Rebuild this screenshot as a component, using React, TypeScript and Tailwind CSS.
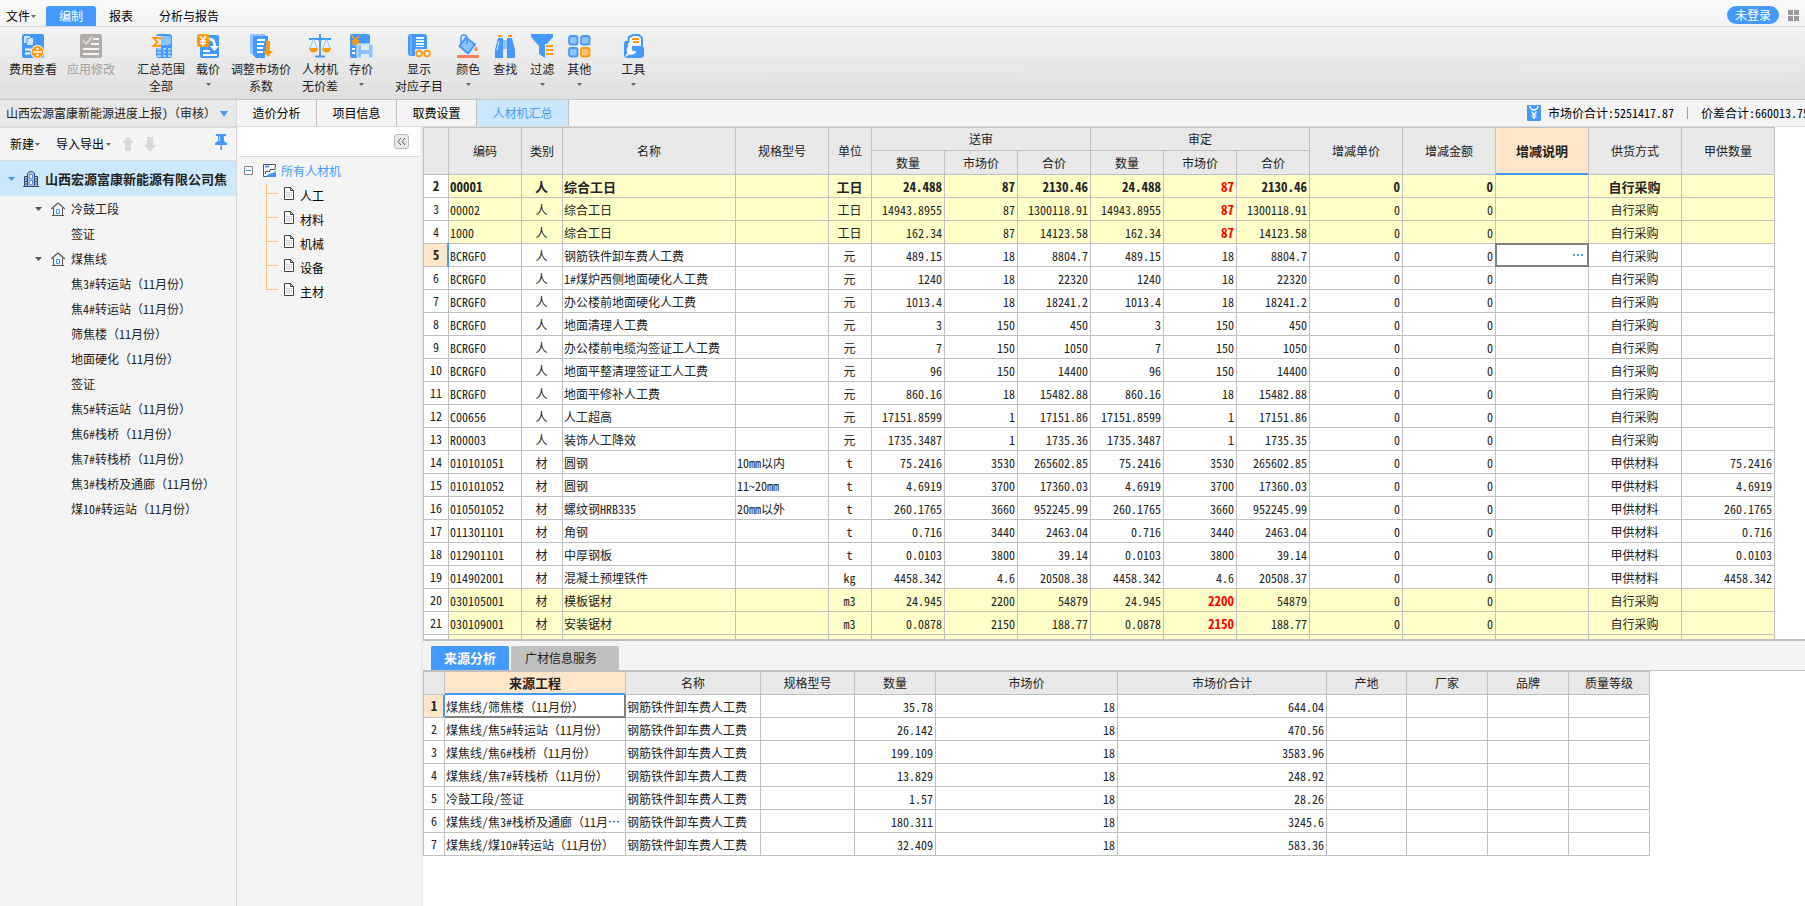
import type { ReactNode } from 'react'
import clsx from 'clsx'

type Item = {
  no: number
  code: string
  kind: string
  name: string
  spec?: string
  unit: string
  qty: string
  price: string
  total: string
  checkedTotal?: string
  owner?: string
  tone?: 'bold' | 'changed'
}

const items: Item[] = [
  { no: 2, code: '00001', kind: '人', name: '综合工日', unit: '工日', qty: '24.488', price: '87', total: '2130.46', tone: 'bold' },
  { no: 3, code: '00002', kind: '人', name: '综合工日', unit: '工日', qty: '14943.8955', price: '87', total: '1300118.91', tone: 'changed' },
  { no: 4, code: '1000', kind: '人', name: '综合工日', unit: '工日', qty: '162.34', price: '87', total: '14123.58', tone: 'changed' },
  { no: 5, code: 'BCRGF0', kind: '人', name: '钢筋铁件卸车费人工费', unit: '元', qty: '489.15', price: '18', total: '8804.7' },
  { no: 6, code: 'BCRGF0', kind: '人', name: '1#煤炉西侧地面硬化人工费', unit: '元', qty: '1240', price: '18', total: '22320' },
  { no: 7, code: 'BCRGF0', kind: '人', name: '办公楼前地面硬化人工费', unit: '元', qty: '1013.4', price: '18', total: '18241.2' },
  { no: 8, code: 'BCRGF0', kind: '人', name: '地面清理人工费', unit: '元', qty: '3', price: '150', total: '450' },
  { no: 9, code: 'BCRGF0', kind: '人', name: '办公楼前电缆沟签证工人工费', unit: '元', qty: '7', price: '150', total: '1050' },
  { no: 10, code: 'BCRGF0', kind: '人', name: '地面平整清理签证工人工费', unit: '元', qty: '96', price: '150', total: '14400' },
  { no: 11, code: 'BCRGF0', kind: '人', name: '地面平修补人工费', unit: '元', qty: '860.16', price: '18', total: '15482.88' },
  { no: 12, code: 'C00656', kind: '人', name: '人工超高', unit: '元', qty: '17151.8599', price: '1', total: '17151.86' },
  { no: 13, code: 'R00003', kind: '人', name: '装饰人工降效', unit: '元', qty: '1735.3487', price: '1', total: '1735.36', checkedTotal: '1735.35' },
  { no: 14, code: '010101051', kind: '材', name: '圆钢', spec: '10mm以内', unit: 't', qty: '75.2416', price: '3530', total: '265602.85', owner: '75.2416' },
  { no: 15, code: '010101052', kind: '材', name: '圆钢', spec: '11~20mm', unit: 't', qty: '4.6919', price: '3700', total: '17360.03', owner: '4.6919' },
  { no: 16, code: '010501052', kind: '材', name: '螺纹钢HRB335', spec: '20mm以外', unit: 't', qty: '260.1765', price: '3660', total: '952245.99', owner: '260.1765' },
  { no: 17, code: '011301101', kind: '材', name: '角钢', unit: 't', qty: '0.716', price: '3440', total: '2463.04', owner: '0.716' },
  { no: 18, code: '012901101', kind: '材', name: '中厚钢板', unit: 't', qty: '0.0103', price: '3800', total: '39.14', owner: '0.0103' },
  { no: 19, code: '014902001', kind: '材', name: '混凝土预埋铁件', unit: 'kg', qty: '4458.342', price: '4.6', total: '20508.38', checkedTotal: '20508.37', owner: '4458.342' },
  { no: 20, code: '030105001', kind: '材', name: '模板锯材', unit: 'm3', qty: '24.945', price: '2200', total: '54879', tone: 'changed' },
  { no: 21, code: '030109001', kind: '材', name: '安装锯材', unit: 'm3', qty: '0.0878', price: '2150', total: '188.77', tone: 'changed' },
]

const sources = [
  ['煤焦线/筛焦楼（11月份）', '35.78', '644.04'],
  ['煤焦线/焦5#转运站（11月份）', '26.142', '470.56'],
  ['煤焦线/焦6#栈桥（11月份）', '199.109', '3583.96'],
  ['煤焦线/焦7#转栈桥（11月份）', '13.829', '248.92'],
  ['冷鼓工段/签证', '1.57', '28.26'],
  ['煤焦线/焦3#栈桥及通廊（11月⋯', '180.311', '3245.6'],
  ['煤焦线/煤10#转运站（11月份）', '32.409', '583.36'],
]

const project = [
  { label: '冷鼓工段', group: true },
  { label: '签证' },
  { label: '煤焦线', group: true },
  { label: '焦3#转运站（11月份）' },
  { label: '焦4#转运站（11月份）' },
  { label: '筛焦楼（11月份）' },
  { label: '地面硬化（11月份）' },
  { label: '签证' },
  { label: '焦5#转运站（11月份）' },
  { label: '焦6#栈桥（11月份）' },
  { label: '焦7#转栈桥（11月份）' },
  { label: '焦3#栈桥及通廊（11月份）' },
  { label: '煤10#转运站（11月份）' },
]

const uiFont = "font-['Noto_Sans_CJK_SC',sans-serif]"
const gridFont = "font-['Noto_Sans_Mono_CJK_SC','Liberation_Mono','Noto_Sans_CJK_SC',monospace]"

const box = 'h-[23px] overflow-hidden whitespace-nowrap border-b border-r border-[#c0c0c0]'
const cell = `${box} pt-[2px] pr-[2px] pb-0 pl-px`
const num = `${box} p-0 text-center`
const head = 'border-b border-r border-[#c0c0c0] bg-[#e8e8e8] p-0 text-center font-normal whitespace-nowrap'

function Caret({ className = 'text-[#666]' }: { className?: string }) {
  return (
    <svg width="5" height="3" viewBox="0 0 5 3" className={className}>
      <path d="M0 0h5L2.5 3z" fill="currentColor" />
    </svg>
  )
}

function Icon({ children }: { children: ReactNode }) {
  return (
    <svg width="24" height="24" viewBox="0 0 24 24" fill="none" className="shrink-0">
      {children}
    </svg>
  )
}

const B = '#4499ff'
const L = '#8cc4ff'
const O = '#ff9a0e'

const icons = {
  fee: (
    <Icon>
      <rect x="1" y="0" width="22" height="24" rx="2" fill={B} />
      <path d="M3 2h6v2h3v7H6V9H3z" fill="#cfe5ff" />
      <path d="M6 4.500h3M6 4.500V9" stroke={B} />
      <path d="M4 15.500h6M4 19.500h5" stroke="#fff" strokeWidth="2" />
      <circle cx="16.500" cy="18" r="6.500" fill={O} stroke="#fff" strokeWidth="1" />
      <path d="M12 18h9" stroke="#fff" strokeWidth="1.500" />
      <circle cx="16.500" cy="15" r="1.200" fill="#fff" />
      <circle cx="16.500" cy="21" r="1.200" fill="#fff" />
    </Icon>
  ),
  apply: (
    <Icon>
      <rect x="1" y="0" width="22" height="24" rx="2" fill="#b0aca8" />
      <path d="M4 6l3 4 6-7" stroke="#d9d6d3" strokeWidth="2" />
      <path d="M14 5h6M12 10h8M4 15h16M4 20h16" stroke="#f4f4f4" strokeWidth="2" />
    </Icon>
  ),
  scope: (
    <Icon>
      <rect x="7" y="0" width="16" height="24" rx="3" fill={B} />
      <rect x="10" y="2" width="12" height="9" rx="3" fill={L} />
      <path d="M8 15h4M14 15h3M19 15h3M8 18.500h4M14 18.500h3M19 18.500h3M8 22h4M14 22h3M19 22h3" stroke="#a9d3ff" strokeWidth="2" />
      <path d="M2 2h10v12H2z" fill="#eef0f2" />
      <path d="M11 5.500V4H4.500l4 4-4 4H11v-1.500" stroke={O} strokeWidth="2" />
    </Icon>
  ),
  load: (
    <Icon>
      <rect x="4" y="1" width="19" height="23" rx="2" fill={B} />
      <path d="M7 17h7M7 21h14" stroke="#fff" strokeWidth="2" />
      <path d="M13 5c5 0 6 4 5.500 8" stroke="#fff" strokeWidth="2.500" />
      <path d="M14 12h9l-4.500 5z" fill="#fff" />
      <rect x="1" y="0" width="12" height="13" rx="2" fill={O} />
      <path d="M4 2l3 4 3-4M7 6v6M4 7h6M4 9.500h6" stroke="#fff" strokeWidth="1.600" />
    </Icon>
  ),
  adjust: (
    <Icon>
      <rect x="1" y="0" width="16" height="20" rx="2" fill={L} />
      <path d="M5 2h14v15h-3v7H7l-3-3V3z" fill={B} />
      <path d="M8 6h8M8 10h7M8 14h6M8 18h6" stroke="#fff" strokeWidth="1.800" />
      <path d="M17 7h4v10h3l-5 6-5-6h3z" fill={O} />
    </Icon>
  ),
  scales: (
    <Icon>
      <path d="M12 0v22M1 5h22M7 22.500h10" stroke={B} strokeWidth="1.800" />
      <path d="M5.500 5L2 14M5.500 5L9 14M18.500 5L15 14M18.500 5L22 14" stroke={L} />
      <path d="M1 14h9a4.500 4.500 0 0 1-9 0zM14 14h9a4.500 4.500 0 0 1-9 0z" fill={O} />
      <circle cx="12" cy="5" r="2" fill={B} />
    </Icon>
  ),
  save: (
    <Icon>
      <rect x="1" y="0" width="20" height="24" rx="2" fill={B} />
      <path d="M3 2l3.500 4L10 2M6.500 6v6M3 7h7M3 9.500h7" stroke={O} strokeWidth="1.800" />
      <path d="M3 15h3M3 19h3" stroke="#fff" strokeWidth="2" />
      <rect x="8" y="10" width="16" height="14" rx="2" fill={L} stroke="#eaf4ff" />
      <path d="M12 11h8v5h-8zM12 20h8v4h-8z" fill="#dceeff" />
    </Icon>
  ),
  show: (
    <Icon>
      <rect x="1" y="0" width="19" height="22" rx="3" fill={B} />
      <path d="M4 1v20" stroke={L} />
      <path d="M9 3h8v10H9z" fill="#eaf4ff" />
      <path d="M9 5.500h8M9 8.500h8M9 11.500h8" stroke={B} strokeWidth="1.200" />
      <path d="M8 15h16v9H8z" fill="#ebebeb" />
      <circle cx="12" cy="19.500" r="2.800" stroke={O} strokeWidth="1.800" />
      <circle cx="20" cy="19.500" r="2.800" stroke={O} strokeWidth="1.800" />
      <path d="M14 18.500h4" stroke={O} strokeWidth="1.500" />
    </Icon>
  ),
  color: (
    <Icon>
      <path d="M10 3.500l9 7-7 9-8.500-7.500z" fill={L} stroke={B} strokeWidth="2" strokeLinejoin="round" />
      <path d="M5 11V4c0-4 6-4 6 0v6" stroke={B} strokeWidth="1.600" />
      <path d="M20 12c2 3 2 5 0 5s-2-2 0-5z" fill="#ff7f5c" />
      <path d="M1 22.500h22" stroke="#ff7f5c" strokeWidth="3" />
    </Icon>
  ),
  find: (
    <Icon>
      <path d="M5 2h4M15 2h4" stroke={O} strokeWidth="2" />
      <path d="M5 4h5v20H2v-8zM14 4h5l3 12v8h-8z" fill={B} />
      <path d="M10 6h4v9h-4z" fill={L} />
      <path d="M4 16L6 7" stroke="#dceeff" />
    </Icon>
  ),
  filter: (
    <Icon>
      <path d="M1 0h22v3l-8 9v12l-6-4v-8L1 3z" fill={B} />
      <path d="M15 10h9v12h-9z" fill="#ebebeb" />
      <path d="M16 12h7M16 16h7M16 20h7" stroke={O} strokeWidth="2" />
    </Icon>
  ),
  others: (
    <Icon>
      <g fill={L} stroke={B} strokeWidth="1.800">
        <rect x="2" y="2" width="8.500" height="8.500" rx="2" />
        <rect x="14" y="2" width="8.500" height="8.500" rx="2" />
        <rect x="2" y="14" width="8.500" height="8.500" rx="2" />
        <rect x="14" y="14" width="8.500" height="8.500" rx="2" fill="#ffc46b" stroke={O} />
      </g>
    </Icon>
  ),
  tools: (
    <Icon>
      <path d="M7 9l1-6 4-2h6l3 3v8" stroke={B} strokeWidth="2" fill="#f4f9ff" />
      <path d="M11 5h7M12 8h6" stroke={O} strokeWidth="2" />
      <path d="M4 7h3v5h14l2 2v8l-2 2H5l-2-2V9z" fill={B} />
      <path d="M5 22l5-5M10 12a4 4 0 1 0 4 6l-4-1z" stroke="#fff" strokeWidth="1.800" fill="#fff" />
    </Icon>
  ),
}

function Tool({ icon, label, sub, menu, disabled }: { icon: ReactNode; label: string; sub?: string; menu?: boolean; disabled?: boolean }) {
  return (
    <button disabled={disabled} className="flex flex-col items-center text-xs leading-[17px] text-[#222] disabled:text-[#a0a0a0]">
      {icon}
      <span className="mt-[2px] whitespace-nowrap">{label}</span>
      {sub && <span className="whitespace-nowrap">{sub}</span>}
      {menu && <Caret className="mt-[6px] text-[#666]" />}
    </button>
  )
}

function TopBar() {
  return (
    <header className="flex h-[27px] shrink-0 items-end border-b border-[#d6d6d6] bg-linear-to-b from-[#fafafa] to-[#f3f3f3] text-xs">
      <button className="flex h-5 items-center gap-px pr-[10px] pl-[6px]">
        文件
        <Caret />
      </button>
      <button className="h-5 rounded-t-[3px] bg-[#4499ff] px-[13px] text-white">编制</button>
      <button className="h-5 px-[13px]">报表</button>
      <button className="h-5 px-[13px]">分析与报告</button>
      <div className="mb-[2px] ml-auto flex items-center gap-[9px] pr-[6px]">
        <button className="h-[18px] rounded-full bg-[#4499ff] px-2 leading-[18px] text-white">未登录</button>
        <button aria-label="布局">
          <svg width="11" height="11" viewBox="0 0 11 11" fill="#999">
            <path d="M0 0h5v5H0zM6 0h5v5H6zM0 6h5v5H0zM6 6h5v5H6z" />
          </svg>
        </button>
      </div>
    </header>
  )
}

function Ribbon() {
  return (
    <div className="flex h-[73px] shrink-0 items-start gap-[22px] border-b border-[#c8c8c8] bg-linear-to-b from-[#f3f3f3] to-[#dedede] px-[9px] pt-[7px]">
      <div className="flex gap-[10px]">
        <Tool icon={icons.fee} label="费用查看" />
        <Tool icon={icons.apply} label="应用修改" disabled />
      </div>
      <div className="flex gap-[11px]">
        <Tool icon={icons.scope} label="汇总范围" sub="全部" />
        <Tool icon={icons.load} label="载价" menu />
        <Tool icon={icons.adjust} label="调整市场价" sub="系数" />
        <Tool icon={icons.scales} label="人材机" sub="无价差" />
        <Tool icon={icons.save} label="存价" menu />
      </div>
      <div className="flex gap-[13px]">
        <Tool icon={icons.show} label="显示" sub="对应子目" />
        <Tool icon={icons.color} label="颜色" menu />
        <Tool icon={icons.find} label="查找" />
        <Tool icon={icons.filter} label="过滤" menu />
        <Tool icon={icons.others} label="其他" menu />
      </div>
      <div className="ml-2 flex">
        <Tool icon={icons.tools} label="工具" menu />
      </div>
    </div>
  )
}

function ProjectPanel() {
  return (
    <aside className={clsx('flex w-[237px] shrink-0 flex-col border-r border-[#d8d8d8] text-xs text-[#222]', gridFont)}>
      <div className="relative h-[28px] shrink-0 border-b-2 border-[#dcdcdc] bg-[#e8e8e8]">
        <select aria-label="当前工程" className="h-full w-full appearance-none bg-transparent pl-[6px] text-xs outline-none">
          <option>山西宏源富康新能源进度上报)（审核）</option>
        </select>
        <svg width="8" height="6" viewBox="0 0 8 6" className="pointer-events-none absolute top-[11px] right-2">
          <path d="M0 0h8L4 6z" fill={B} />
        </svg>
      </div>
      <div className={clsx('flex h-[33px] shrink-0 items-center border-b border-[#d8d8d8] pl-[10px] text-black', uiFont)}>
        <button className="flex items-center gap-px">
          新建
          <Caret />
        </button>
        <button className="ml-4 flex items-center gap-[2px]">
          导入导出
          <Caret />
        </button>
        <button aria-label="上移" className="ml-[11px]">
          <svg width="12" height="16" viewBox="0 0 12 16" fill="#d8d8d8">
            <path d="M6 0l6 7H9v8H3V7H0z" />
          </svg>
        </button>
        <button aria-label="下移" className="ml-[10px]">
          <svg width="12" height="16" viewBox="0 0 12 16" fill="#d8d8d8">
            <path d="M6 16l6-7H9V1H3v8H0z" />
          </svg>
        </button>
        <button aria-label="固定" className="mr-[9px] mb-1 ml-auto">
          <svg width="12" height="16" viewBox="0 0 12 16" fill={B}>
            <path d="M1 0h10v2H9v5l3 2v2H0V9l3-2V2H1z" />
            <path d="M5.500 11H7v5H5.500z" />
            <path d="M4.500 2v5" stroke="#b8dbff" />
          </svg>
        </button>
      </div>
      <div className="flex h-[35px] shrink-0 items-center overflow-hidden bg-[#cce8ff] pl-2">
        <svg width="7" height="4" viewBox="0 0 7 4" className="shrink-0">
          <path d="M0 0h7L3.500 4z" fill={B} />
        </svg>
        <svg width="16" height="16" viewBox="0 0 16 16" fill="none" className="mr-[6px] ml-2 shrink-0">
          <path d="M4.500 15V2.500l2-2h3l2 2V15" stroke="#404a66" fill="#a9bde0" />
          <path d="M1.500 15V5.500h3V15M11.500 5.500h3V15M0 15.500h16" stroke="#404a66" fill="#a9bde0" />
          <path d="M2 8h2M2 10.500h2M2 13h2M12 8h2M12 10.500h2M12 13h2" stroke="#404a66" />
          <path d="M6.500 3.500h3v4h-3zM6.500 9.500h3v4h-3z" stroke={B} fill="#fff" />
        </svg>
        <span className="text-[13px] font-bold whitespace-nowrap">山西宏源富康新能源有限公司焦</span>
      </div>
      <ul>
        {project.map((node, i) => (
          <li key={i} className="flex h-[25px] items-center pl-[35px] whitespace-nowrap">
            {node.group ? (
              <>
                <svg width="7" height="4" viewBox="0 0 7 4">
                  <path d="M0 0h7L3.500 4z" fill="#555" />
                </svg>
                <svg width="14" height="14" viewBox="0 0 14 14" fill="none" className="mr-[6px] ml-[9px]">
                  <path d="M0 7l7-6 7 6" stroke="#555" strokeWidth="1.300" />
                  <path d="M2.500 6v7.500h9V6M1 13.500h12" stroke="#555" />
                  <path d="M5.500 7.500h3v4h-3z" stroke={B} />
                </svg>
              </>
            ) : (
              <span className="w-[36px]" />
            )}
            {node.label}
          </li>
        ))}
      </ul>
    </aside>
  )
}

function ViewTabs() {
  return (
    <nav className="flex h-[27px] shrink-0 items-stretch overflow-hidden border-b border-[#dcdcdc] text-xs">
      {['造价分析', '项目信息', '取费设置'].map((tab) => (
        <button key={tab} className="w-20 border-r border-[#c0c0c0]">
          {tab}
        </button>
      ))}
      <button className="w-[92px] border-r border-[#c0c0c0] bg-[#cce8ff] text-[#4499ff]">人材机汇总</button>
      <div className={clsx('-mr-1 ml-auto flex items-center whitespace-nowrap text-black', gridFont)}>
        <svg width="14" height="16" viewBox="0 0 14 16" fill="none" className="mr-[7px]">
          <rect width="14" height="16" rx="1" fill={B} />
          <path d="M3 1a4 4 0 0 0 8 0" stroke="#fff" strokeWidth="1.500" />
          <path d="M4.500 6.500L7 9.500l2.500-3M7 9.500V14M4.500 10h5M4.500 12h5" stroke="#fff" strokeWidth="1.200" />
        </svg>
        市场价合计:5251417.87
        <span className="mx-[13px] h-3 w-px bg-[#8fa3c8]" />
        价差合计:660013.75
      </div>
    </nav>
  )
}

function CategoryTree() {
  return (
    <div className="flex w-[186px] shrink-0 flex-col border-r-2 border-[#ebebeb] text-xs">
      <div className="mr-[2px] ml-[2px] flex h-[30px] items-center justify-end border-b border-[#dcdcdc] bg-white pr-[10px]">
        <button aria-label="收起" className="flex size-[15px] items-center justify-center rounded-[3px] border border-[#b8b8b8] bg-[#ebebeb]">
          <svg width="9" height="7" viewBox="0 0 9 7" fill="none" stroke="#555">
            <path d="M4 0L1 3.500 4 7M8 0L5 3.500 8 7" />
          </svg>
        </button>
      </div>
      <div className="flex h-[27px] items-center pl-[7px] text-[#4499ff]">
        <svg width="9" height="9" viewBox="0 0 9 9" fill="none">
          <path d="M.5.5h8v8h-8z" stroke="#888" fill="#fff" />
          <path d="M2 4.500h5" stroke="#2f8fd0" />
        </svg>
        <svg width="14" height="13" viewBox="0 0 14 13" fill="none" className="mr-1 ml-[10px]">
          <path d="M12.500 3V.5H.5v12H4" stroke="#555" fill="#fff" />
          <path d="M2 2.500h4" stroke={B} strokeWidth="2" />
          <path d="M2.500 10V7.500H7v-2h5V3" stroke="#555" />
          <path d="M4 13V11l3-1.500 3-.500 3-2V13z" fill={B} />
        </svg>
        所有人材机
      </div>
      <ul className="pl-[29px]">
        {['人工', '材料', '机械', '设备', '主材'].map((label, i) => (
          <li key={label} className="flex h-6 items-center">
            <svg width="13" height="24" viewBox="0 0 13 24" stroke="#ffc878" fill="none" className="shrink-0">
              <path d={i === 4 ? 'M.5 0v9.500H12' : 'M.5 0v24M.5 9.500H12'} />
            </svg>
            <svg width="10" height="13" viewBox="0 0 10 13" fill="none" className="mr-[6px] mb-[6px] ml-[5px] shrink-0">
              <path d="M.5.5h6l3 3v9h-9z" stroke="#444" fill="#fff" />
              <path d="M6.500.5v3h3" stroke="#444" />
              <path d="M2 5.500h6M2 7.500h6M2 9.500h6" stroke="#ccc" />
            </svg>
            {label}
          </li>
        ))}
      </ul>
    </div>
  )
}

function ItemTable() {
  return (
    <table className="w-px table-fixed border-separate border-spacing-0 border-t border-l border-[#c0c0c0]">
      <colgroup>
        <col className="w-[25px]" />
        <col className="w-[73px]" />
        <col className="w-[41px]" />
        <col className="w-[173px]" />
        <col className="w-[93px]" />
        <col className="w-[43px]" />
        <col span={6} className="w-[73px]" />
        <col span={5} className="w-[93px]" />
      </colgroup>
      <thead>
        <tr className="h-[23px]">
          <th rowSpan={2} className={head} />
          {['编码', '类别', '名称', '规格型号', '单位'].map((t) => (
            <th key={t} rowSpan={2} className={head}>{t}</th>
          ))}
          <th colSpan={3} className={head}>送审</th>
          <th colSpan={3} className={head}>审定</th>
          <th rowSpan={2} className={head}>增减单价</th>
          <th rowSpan={2} className={head}>增减金额</th>
          <th rowSpan={2} className="relative border-r border-b border-[#c0c0c0] bg-[#ffe6c8] p-0 text-[13px] font-bold whitespace-nowrap">
            增减说明
            <span className="absolute inset-x-0 -bottom-px h-[2px] bg-[#4499ff]" />
          </th>
          <th rowSpan={2} className={head}>供货方式</th>
          <th rowSpan={2} className={head}>甲供数量</th>
        </tr>
        <tr className="h-[24px]">
          {['数量', '市场价', '合价', '数量', '市场价', '合价'].map((t, i) => (
            <th key={i} className={head}>{t}</th>
          ))}
        </tr>
      </thead>
      <tbody>
        {items.map((r) => {
          const active = r.no === 5
          return (
            <tr key={r.no} className={clsx(r.tone && 'bg-[#ffffc8]', r.tone === 'bold' && 'text-[13px] font-bold')}>
              <td className={clsx(num, active ? 'relative overflow-visible bg-[#ffe6c8] text-[13px] font-bold' : 'bg-white')}>
                {r.no}
                {active && <span className="absolute -inset-y-px -right-px w-[2px] bg-[#4499ff]" />}
              </td>
              <td className={cell}>{r.code}</td>
              <td className={clsx(cell, 'text-center')}>{r.kind}</td>
              <td className={cell}>{r.name}</td>
              <td className={cell}>{r.spec}</td>
              <td className={clsx(cell, 'text-center')}>{r.unit}</td>
              <td className={clsx(cell, 'text-right')}>{r.qty}</td>
              <td className={clsx(cell, 'text-right')}>{r.price}</td>
              <td className={clsx(cell, 'text-right')}>{r.total}</td>
              <td className={clsx(cell, 'text-right')}>{r.qty}</td>
              <td className={clsx(cell, 'text-right', r.tone && 'text-[13px] font-bold text-[#ff0000]')}>{r.price}</td>
              <td className={clsx(cell, 'text-right')}>{r.checkedTotal ?? r.total}</td>
              <td className={clsx(cell, 'text-right')}>0</td>
              <td className={clsx(cell, 'text-right')}>0</td>
              <td className={clsx(cell, active && 'relative overflow-visible')}>
                {active && (
                  <button aria-label="编辑说明" className="absolute -inset-px flex items-center justify-end border-2 border-[#808080] pr-[3px]">
                    <svg width="11" height="2" viewBox="0 0 11 2" fill="#5a9fd4">
                      <path d="M0 0h2v2H0zM4 0h2v2H4zM8 0h2v2H8z" />
                    </svg>
                  </button>
                )}
              </td>
              <td className={clsx(cell, 'text-center')}>{r.owner ? '甲供材料' : '自行采购'}</td>
              <td className={clsx(cell, 'text-right')}>{r.owner}</td>
            </tr>
          )
        })}
        <tr className="bg-[#ffffc8]">
          <td className={clsx(cell, 'bg-white')} />
          {Array.from({ length: 16 }, (_, i) => (
            <td key={i} className={cell} />
          ))}
        </tr>
      </tbody>
    </table>
  )
}

function SourceTable() {
  return (
    <table className="w-px table-fixed border-separate border-spacing-0 border-t border-l border-[#c0c0c0]">
      <colgroup>
        <col className="w-[21px]" />
        <col className="w-[181px]" />
        <col className="w-[135px]" />
        <col className="w-[94px]" />
        <col className="w-[81px]" />
        <col className="w-[182px]" />
        <col className="w-[209px]" />
        <col className="w-[80px]" />
        <col span={3} className="w-[81px]" />
      </colgroup>
      <thead>
        <tr className="h-[23px]">
          <th className={head} />
          <th className="relative border-r border-b border-[#c0c0c0] bg-[#ffe6c8] p-0 text-[13px] font-bold">
            来源工程
            <span className="absolute inset-x-0 -bottom-px h-[2px] bg-[#4499ff]" />
          </th>
          {['名称', '规格型号', '数量', '市场价', '市场价合计', '产地', '厂家', '品牌', '质量等级'].map((t) => (
            <th key={t} className={head}>{t}</th>
          ))}
        </tr>
      </thead>
      <tbody>
        {sources.map(([name, qty, total], i) => (
          <tr key={name}>
            <td className={clsx(num, i === 0 && 'relative overflow-visible bg-[#ffe6c8] text-[13px] font-bold')}>
              {i + 1}
              {i === 0 && <span className="absolute inset-y-0 -right-px w-[2px] bg-[#4499ff]" />}
            </td>
            <td className={clsx(cell, i === 0 && 'relative overflow-visible')}>
              {name}
              {i === 0 && <span className="absolute top-0 -right-px -bottom-px left-0 border-r-2 border-b-2 border-[#808080]" />}
            </td>
            <td className={cell}>钢筋铁件卸车费人工费</td>
            <td className={cell} />
            <td className={clsx(cell, 'text-right')}>{qty}</td>
            <td className={clsx(cell, 'text-right')}>18</td>
            <td className={clsx(cell, 'text-right')}>{total}</td>
            <td className={cell} />
            <td className={cell} />
            <td className={cell} />
            <td className={cell} />
          </tr>
        ))}
      </tbody>
    </table>
  )
}

export default function App() {
  return (
    <div className={clsx('flex h-screen flex-col overflow-hidden bg-[#f4f4f4] text-black', uiFont)}>
      <TopBar />
      <Ribbon />
      <div className="flex min-h-0 flex-1">
        <ProjectPanel />
        <div className="flex min-w-0 flex-1 flex-col">
          <ViewTabs />
          <div className="flex min-h-0 flex-1">
            <CategoryTree />
            <main className={clsx('flex min-w-0 flex-1 flex-col bg-white text-xs leading-4 text-[#222]', gridFont)}>
              <section className="min-h-0 flex-1 overflow-hidden border-b-2 border-[#c0c0c0]">
                <ItemTable />
              </section>
              <section className="h-[265px] shrink-0 overflow-hidden">
                <div className="flex h-[30px] items-end gap-[2px] border-b border-[#c0c0c0] bg-[#f4f4f4] pl-2">
                  <button className="h-6 w-[78px] rounded-t-[2px] bg-[#4499ff] text-[13px] font-bold text-white">来源分析</button>
                  <button className="h-6 rounded-t-[2px] bg-[#c0c0c0] pr-[22px] pl-[14px]">广材信息服务</button>
                </div>
                <SourceTable />
              </section>
            </main>
          </div>
        </div>
      </div>
    </div>
  )
}
